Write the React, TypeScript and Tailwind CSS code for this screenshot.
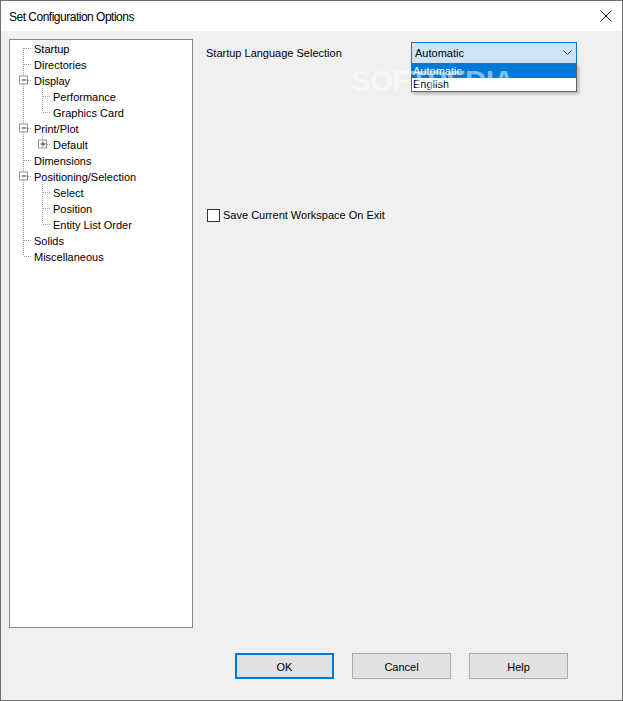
import React from 'react';

type Row = {
  label: string;
  level: 0 | 1;
  box?: 'minus' | 'plus';
  lastChild?: boolean;
  selected?: boolean;
};

const rows: Row[] = [
  { label: 'Startup', level: 0, selected: true },
  { label: 'Directories', level: 0 },
  { label: 'Display', level: 0, box: 'minus' },
  { label: 'Performance', level: 1 },
  { label: 'Graphics Card', level: 1, lastChild: true },
  { label: 'Print/Plot', level: 0, box: 'minus' },
  { label: 'Default', level: 1, box: 'plus', lastChild: true },
  { label: 'Dimensions', level: 0 },
  { label: 'Positioning/Selection', level: 0, box: 'minus' },
  { label: 'Select', level: 1 },
  { label: 'Position', level: 1 },
  { label: 'Entity List Order', level: 1, lastChild: true },
  { label: 'Solids', level: 0 },
  { label: 'Miscellaneous', level: 0 },
];

const dot = { stroke: '#a0a0a0', strokeWidth: 1, strokeDasharray: '1 1' };

function ExpandBox({ cx, kind }: { cx: number; kind: 'minus' | 'plus' }) {
  return (
    <g>
      <rect x={cx - 4} y={4} width={8} height={8} fill="#fff" stroke="#919191" />
      <line x1={cx - 2} y1={8} x2={cx + 3} y2={8} stroke="#333" />
      {kind === 'plus' && <line x1={cx + 0.5} y1={5.5} x2={cx + 0.5} y2={10.5} stroke="#333" />}
    </g>
  );
}

function Connector({ row, index }: { row: Row; index: number }) {
  const first = index === 0;
  const last = index === rows.length - 1;
  const rootX = 13.5;
  const subX = 32.5;
  const w = row.level === 0 ? 22 : 41;
  return (
    <svg width={w} height={16} className="shrink-0">
      {/* root guide */}
      <line x1={rootX} y1={first ? 8 : 0} x2={rootX} y2={last ? 8 : 16} {...dot} />
      {row.level === 0 ? (
        <>
          <line x1={row.box ? 18 : rootX + 0.5} y1={8.5} x2={22} y2={8.5} {...dot} />
          {row.box && <line x1={subX} y1={13} x2={subX} y2={16} {...dot} />}
          {row.box && <ExpandBox cx={13.5} kind={row.box} />}
        </>
      ) : (
        <>
          <line x1={subX} y1={0} x2={subX} y2={row.lastChild ? 8 : 16} {...dot} />
          <line x1={row.box ? 37 : subX + 0.5} y1={8.5} x2={41} y2={8.5} {...dot} />
          {row.box && <ExpandBox cx={32.5} kind={row.box} />}
        </>
      )}
    </svg>
  );
}

function Tree() {
  return (
    <div className="h-[589px] w-[184px] shrink-0 border border-[#828790] bg-white">
      <ul className="flex flex-col">
        {rows.map((row, i) => (
          <li key={row.label} className="flex h-4 items-center">
            <Connector row={row} index={i} />
            <span
              className={`flex h-4 items-center px-[2px] pt-[2px] leading-none ${row.selected ? 'bg-[#f0f0f0]' : ''}`}
            >
              {row.label}
            </span>
          </li>
        ))}
      </ul>
    </div>
  );
}

function Button({ label, primary }: { label: string; primary?: boolean }) {
  return (
    <button
      type="button"
      className={`flex h-[26px] w-[99px] items-center justify-center bg-[#e1e1e1] pt-[2px] text-[11px] text-black ${
        primary ? 'border-2 border-[#0078d7]' : 'border border-[#adadad]'
      }`}
    >
      {label}
    </button>
  );
}

export default function App() {
  return (
    <div
      className="relative flex h-[701px] w-[623px] flex-col border border-[#707070] bg-[#f0f0f0] text-[11px] text-black"
      style={{ fontFamily: '"Liberation Sans", Arial, sans-serif' }}
    >
      <div className="flex h-[30px] shrink-0 items-center justify-between bg-white pl-2 pr-[9px]">
        <span className="pt-px text-[12px] tracking-[-0.5px]">Set Configuration Options</span>
        <svg width="12" height="12" viewBox="0 0 12 12" className="mr-[1px]">
          <path d="M0.5 0.5 L11.5 11.5 M11.5 0.5 L0.5 11.5" stroke="#111" strokeWidth="1" fill="none" />
        </svg>
      </div>

      <div className="flex flex-col px-2 pt-2">
        <div className="flex">
          <Tree />
          <div className="flex flex-col pl-[13px] pt-[3px]">
            <div className="flex items-center">
              <span className="w-[205px]">Startup Language Selection</span>
              <div className="relative">
                <div className="flex h-[22px] w-[166px] items-center justify-between border border-[#0078d7] bg-[#cce4f7] pl-[3px] pr-[4px]">
                  <span>Automatic</span>
                  <svg width="9" height="6" viewBox="0 0 9 6">
                    <path d="M0.5 0.5 L4.5 4.5 L8.5 0.5" stroke="#333" fill="none" />
                  </svg>
                </div>
                <div className="absolute left-0 top-[21px] z-10 flex w-[166px] flex-col border border-[#646464] bg-white shadow-[2px_2px_3px_rgba(0,0,0,0.25)]">
                  <div className="flex h-[14px] items-center bg-[#0078d7] pl-[1px] text-white">Automatic</div>
                  <div className="flex h-[13px] items-center pl-[1px]">English</div>
                </div>
              </div>
            </div>
            <label className="mt-[143px] flex items-center gap-[3px] pl-[1px]">
              <span className="h-[13px] w-[13px] border border-[#333] bg-white" />
              <span>Save Current Workspace On Exit</span>
            </label>
          </div>
        </div>

        <div className="mt-[25px] flex gap-[18px] pl-[226px]">
          <Button label="OK" primary />
          <Button label="Cancel" />
          <Button label="Help" />
        </div>
      </div>

      <span className="pointer-events-none absolute left-[350px] top-[57px] z-20 text-[30px] font-bold tracking-[-1px] text-white/50">
        SOFTPEDIA<sup className="text-[10px]">®</sup>
      </span>
    </div>
  );
}
